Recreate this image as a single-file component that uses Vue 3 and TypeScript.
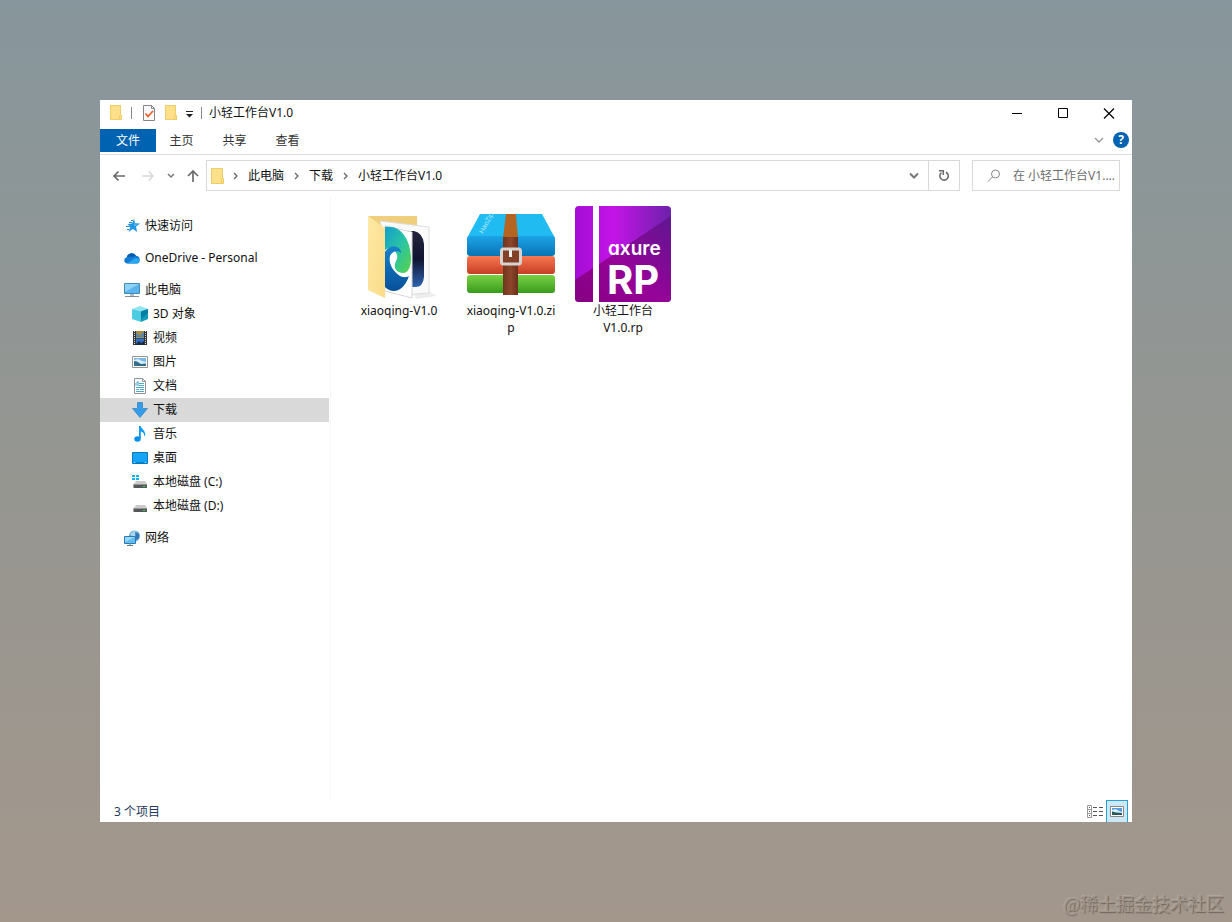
<script setup lang="ts">
import { ref } from 'vue'

interface NavItem {
  id: string
  label: string
  icon: string
  child?: boolean
  spaced?: boolean
}

interface FileItem {
  icon: string
  lines: string[]
}

const tabs: string[] = ['主页', '共享', '查看']
const crumbs: string[] = ['此电脑', '下载', '小轻工作台V1.0']

const navItems: NavItem[] = [
  { id: 'quick', label: '快速访问', icon: 'star' },
  { id: 'onedrive', label: 'OneDrive - Personal', icon: 'cloud', spaced: true },
  { id: 'pc', label: '此电脑', icon: 'pc', spaced: true },
  { id: '3d', label: '3D 对象', icon: 'cube', child: true },
  { id: 'video', label: '视频', icon: 'film', child: true },
  { id: 'pictures', label: '图片', icon: 'picture', child: true },
  { id: 'docs', label: '文档', icon: 'doc', child: true },
  { id: 'downloads', label: '下载', icon: 'down', child: true },
  { id: 'music', label: '音乐', icon: 'music', child: true },
  { id: 'desktop', label: '桌面', icon: 'desktop', child: true },
  { id: 'c', label: '本地磁盘 (C:)', icon: 'diskc', child: true },
  { id: 'd', label: '本地磁盘 (D:)', icon: 'disk', child: true },
  { id: 'network', label: '网络', icon: 'network', spaced: true },
]

const files: FileItem[] = [
  { icon: 'folder', lines: ['xiaoqing-V1.0'] },
  { icon: 'zip', lines: ['xiaoqing-V1.0.zi', 'p'] },
  { icon: 'axure', lines: ['小轻工作台', 'V1.0.rp'] },
]

const selected = ref<string>('downloads')
const query = ref<string>('')
</script>

<template>
  <div class="wallpaper">
    <main class="window">
      <header class="titlebar">
        <svg class="ico" viewBox="0 0 16 16" aria-hidden="true">
          <path d="M2 0h11v10h1v5H2z" fill="#fde089" />
          <path d="M2.500 .5h10v10M2.500.5v14h11v-4h-2v4" fill="none" stroke="#efcd69" />
        </svg>
        <span class="bar"></span>
        <button class="quick check" aria-label="属性">
          <svg class="ico" viewBox="0 0 16 16">
            <path d="M2.500.5h8l3 3v12h-11z" fill="#fafafa" stroke="#858585" />
            <path d="M10.500.5v3h3" fill="none" stroke="#858585" />
            <path d="M4.500 8.500l2.500 3L12 6" fill="none" stroke="#ee5a2c" stroke-width="1.700" />
          </svg>
        </button>
        <button class="quick" aria-label="新建文件夹">
          <svg class="ico" viewBox="0 0 16 16">
            <path d="M2 0h11v10h1v5H2z" fill="#fde089" />
            <path d="M2.500.5h10v10M2.500.5v14h11v-4h-2v4" fill="none" stroke="#efcd69" />
          </svg>
        </button>
        <button class="quick drop" aria-label="自定义快速访问工具栏">
          <svg width="7" height="7" viewBox="0 0 7 7">
            <path d="M0 0h7v1H0zM0 3h7L3.500 6.500z" fill="#222" />
          </svg>
        </button>
        <span class="bar"></span>
        <h1 class="caption">小轻工作台V1.0</h1>
        <div class="controls">
          <button aria-label="最小化">
            <svg width="12" height="11" viewBox="0 0 12 11"><path d="M1 5.500h10" stroke="#000" /></svg>
          </button>
          <button aria-label="最大化">
            <svg width="12" height="11" viewBox="0 0 12 11"><path d="M1.500.5h9v9h-9z" fill="none" stroke="#000" /></svg>
          </button>
          <button aria-label="关闭">
            <svg width="12" height="11" viewBox="0 0 12 11"><path d="M1 .5l10 10M11 .5L1 10.500" stroke="#000" stroke-width="1.200" /></svg>
          </button>
        </div>
      </header>

      <div class="ribbon">
        <button class="tab file">文件</button>
        <button v-for="t in tabs" :key="t" class="tab">{{ t }}</button>
        <div class="ribbon-end">
          <button class="plain" aria-label="展开功能区">
            <svg width="10" height="6" viewBox="0 0 10 6"><path d="M1 1l4 4 4-4" fill="none" stroke="#979797" stroke-width="1.300" /></svg>
          </button>
          <button class="help" aria-label="帮助">?</button>
        </div>
      </div>

      <div class="address-row">
        <div class="history">
          <button class="plain" aria-label="后退">
            <svg width="14" height="12" viewBox="0 0 14 12"><path d="M13 6H2M6.500 1.500L2 6l4.500 4.500" fill="none" stroke="#6c6c6c" stroke-width="1.700" /></svg>
          </button>
          <button class="plain forward" aria-label="前进" disabled>
            <svg width="14" height="12" viewBox="0 0 14 12"><path d="M1 6h11M7.500 1.500L12 6l-4.500 4.500" fill="none" stroke="#d8d8d8" stroke-width="1.600" /></svg>
          </button>
          <button class="plain" aria-label="最近位置">
            <svg width="8" height="6" viewBox="0 0 8 6"><path d="M1 1l3 3 3-3" fill="none" stroke="#777" stroke-width="1.500" /></svg>
          </button>
          <button class="plain" aria-label="向上">
            <svg width="12" height="14" viewBox="0 0 12 14"><path d="M6 13V2M1 7l5-5 5 5" fill="none" stroke="#6c6c6c" stroke-width="1.700" /></svg>
          </button>
        </div>
        <nav class="address" aria-label="地址">
          <svg class="ico" viewBox="0 0 16 16" aria-hidden="true">
            <path d="M2 0h12v10h1v6H2z" fill="#fde089" />
            <path d="M2.500.5h11v10M2.500.5v15h12v-5h-2v5" fill="none" stroke="#efcd69" />
          </svg>
          <template v-for="c in crumbs" :key="c">
            <svg class="sep" width="5" height="8" viewBox="0 0 5 8" aria-hidden="true"><path d="M1 1l3 3-3 3" fill="none" stroke="#666" stroke-width="1.300" /></svg>
            <a href="#" class="crumb">{{ c }}</a>
          </template>
          <button class="plain addr-drop" aria-label="以前的位置">
            <svg width="10" height="7" viewBox="0 0 10 7"><path d="M1 1.500l4 4 4-4" fill="none" stroke="#777" stroke-width="2" /></svg>
          </button>
          <button class="plain refresh" aria-label="刷新">
            <svg width="12" height="13" viewBox="0 0 12 13">
              <path d="M8 3.200A4.200 4.200 0 1 1 3.400 3.700" fill="none" stroke="#6c6c6c" stroke-width="1.600" />
              <path d="M1 1.700h4.300V6" fill="none" stroke="#6c6c6c" stroke-width="1.500" />
            </svg>
          </button>
        </nav>
        <label class="search">
          <svg width="14" height="14" viewBox="0 0 14 14" aria-hidden="true">
            <circle cx="8.500" cy="5" r="4" fill="none" stroke="#888" />
            <path d="M5.500 8L1 12.500" stroke="#888" />
          </svg>
          <input v-model="query" type="text" placeholder="在 小轻工作台V1...." aria-label="搜索" />
        </label>
      </div>

      <div class="content">
        <nav class="tree" aria-label="导航窗格">
          <button
            v-for="n in navItems"
            :key="n.id"
            class="node"
            :class="{ child: n.child, spaced: n.spaced, active: selected === n.id }"
            @click="selected = n.id"
          >
            <svg class="ico" viewBox="0 0 16 16" aria-hidden="true">
              <template v-if="n.icon === 'star'">
                <path d="M10 1l1.200 4.300 4.800.2-4 3.200 1.200 5.300-4.300-3L4.500 14l1.900-5.200L3.500 6l4.600-.5z" fill="#2196e3" />
                <path d="M10 3l.8 3.200 3.200.3-4 2z" fill="#5dbbf1" />
                <path d="M5 4.500h3M2 8.500h4M3 11.500h2M7 2.500h2" stroke="#2d87c4" />
              </template>
              <template v-else-if="n.icon === 'cloud'">
                <path d="M3.200 13.500a3.200 3.200 0 0 1-.5-6.300A5 5 0 0 1 12 5.700a4 4 0 0 1 1 7.800z" fill="#1479d3" />
                <path d="M3 7.200a5 5 0 0 1 9-1.500 4 4 0 0 0-3 1.300L6 6.500z" fill="#075cae" />
                <path d="M3.200 13.500l7.500-5.200a3.600 3.600 0 0 1 5 3.200 2.400 2.400 0 0 1-2.500 2z" fill="#29a6ef" />
              </template>
              <template v-else-if="n.icon === 'pc'">
                <path d="M.5 1.500h15v10H.5z" fill="#5ab4ee" stroke="#4288b9" />
                <path d="M1 2h14L1 10z" fill="#8dd2f8" />
                <path d="M6 12h4v2H6z" fill="#b2bcc2" />
                <path d="M1 14.500h14" stroke="#7e8d97" />
              </template>
              <template v-else-if="n.icon === 'cube'">
                <path d="M0 3l8-3 8 3-6 3z" fill="#8ee4f0" />
                <path d="M0 3l9 2.500V16l-9-3z" fill="#4bcce0" />
                <path d="M9 5.500L16 3v10l-7 3z" fill="#149cba" />
                <path d="M9 5.500L16 3v4l-7 6z" fill="#087fa4" />
              </template>
              <template v-else-if="n.icon === 'film'">
                <path d="M1 1h14v14H1z" fill="#323537" />
                <path d="M4 1h8v7H4z" fill="#a48d46" />
                <path d="M4 8.500h8V15H4z" fill="#3470b9" />
                <path d="M4 3l4 3 4-4v5H4z" fill="#4e85bb" />
                <path d="M4 14l3-3 2 2 3-2v4H4z" fill="#182b49" />
                <path d="M2.500 1v14M13.500 1v14" stroke="#ddd" stroke-dasharray="1 1" />
              </template>
              <template v-else-if="n.icon === 'picture'">
                <path d="M.5 2.500h15v11H.5z" fill="#fff" stroke="#919699" />
                <path d="M2 4h12v8H2z" fill="#7db8ea" />
                <path d="M2 6l4-1 4 2 4 1v3H2z" fill="#d5effa" />
                <path d="M2 7l3 .5L9 10l5-.5V12H2z" fill="#376d8c" />
              </template>
              <template v-else-if="n.icon === 'doc'">
                <path d="M2.500.5h8l3 3v12h-11z" fill="#fff" stroke="#8b9499" />
                <path d="M10.500.5v3h3" fill="none" stroke="#8b9499" />
                <path d="M7 5.500h5M7 7.500h5M4 9.500h8M4 11.500h3M8 11.500h4M4 13.500h8" stroke="#4ea9d0" />
                <path d="M4 7.500V5.500l2-2v4.500" stroke="#389ac5" fill="none" />
              </template>
              <template v-else-if="n.icon === 'down'">
                <path d="M5.500.5h5v6h5L8 15.500.5 6.500h5z" fill="#339be7" stroke="#4a92c6" />
              </template>
              <template v-else-if="n.icon === 'music'">
                <ellipse cx="5.500" cy="13" rx="3.200" ry="2.700" fill="#078ee7" />
                <path d="M7 0h1.800c.3 3 4.700 4 4.400 9L12 10.500C12.500 7 11 6 8.800 5.500V13H7z" fill="#0c9bf0" />
              </template>
              <template v-else-if="n.icon === 'desktop'">
                <path d="M.5 2.500h15v11H.5z" fill="#18a4f5" stroke="#0878bf" />
                <path d="M2 12.500h1M13 12.500h1" stroke="#9adfff" />
                <path d="M4 12.500h8" stroke="#0c84cc" />
              </template>
              <template v-else-if="n.icon === 'diskc' || n.icon === 'disk'">
                <path v-if="n.icon === 'diskc'" d="M0 1h3v2H0zM4 1h3v2H4zM0 4h3v2H0zM4 4h3v2H4z" fill="#06b6eb" />
                <path d="M4 7h9l2 3H2z" fill="#cbcbcb" />
                <path d="M1.500 10h13.500v4H1.500z" fill="#55585a" />
                <path d="M2 10.500h13" stroke="#949494" />
                <path d="M11 12.500h2" stroke="#32e63a" />
              </template>
              <template v-else>
                <circle cx="10.500" cy="6" r="5.500" fill="#69a8d8" />
                <path d="M6 4l4-3 3 1-2 3 3 2-3 4-3-5z" fill="#a6d9ef" />
                <path d="M11 2l4 2v4l-3 2z" fill="#357ab4" />
                <path d="M.5 6.500h11v7H.5z" fill="#61bdf0" stroke="#2d79ac" />
                <path d="M1 7h10l-10 5z" fill="#98dbf8" />
                <path d="M6 13v2M3 15.500h6" stroke="#527f9e" />
              </template>
            </svg>
            <span>{{ n.label }}</span>
          </button>
        </nav>

        <section class="files" aria-label="文件">
          <button v-for="f in files" :key="f.icon" class="item">
            <svg v-if="f.icon === 'folder'" class="big" viewBox="0 0 96 96" aria-hidden="true">
              <defs>
                <linearGradient id="flap" x1="0" y1="0" x2="1" y2="1">
                  <stop offset="0" stop-color="#ffe9a6" /><stop offset="1" stop-color="#f9dc88" />
                </linearGradient>
                <linearGradient id="edge" x1="0" y1="0" x2="1" y2="1">
                  <stop offset="0" stop-color="#129fca" /><stop offset=".5" stop-color="#2bc3a5" /><stop offset="1" stop-color="#58d547" />
                </linearGradient>
                <linearGradient id="deep" x1="0" y1="0" x2="0" y2="1">
                  <stop offset="0" stop-color="#1683cb" /><stop offset="1" stop-color="#07509a" />
                </linearGradient>
                <linearGradient id="night" x1="0" y1="0" x2="0" y2="1">
                  <stop offset="0" stop-color="#24253b" /><stop offset=".5" stop-color="#101331" /><stop offset="1" stop-color="#2e65b0" />
                </linearGradient>
              </defs>
              <path d="M62 85h16l7 5-20 3z" fill="#ededed" />
              <path d="M17 10h49v15L35 30z" fill="#efcf7b" />
              <path d="M29 15l49 6v66l-24 2z" fill="#fafafa" stroke="#dedede" />
              <path d="M57 25h6q9 2 10 13v33q-1 11-10 10h-6z" fill="url(#night)" />
              <path d="M34 20l27 6v66l-27-7z" fill="#fff" stroke="#d6d6d6" />
              <path d="M34 21C50 18 60 34 60 53c0 8-3 14-8 14-6 0-9-4-8-9 1-4 3-5 2-9-2-6-7-9-12-5z" fill="url(#edge)" />
              <path d="M34 46c3-5 8-7 12-5 3 1 4 4 4 6-3-3-9-2-11 3-2 8 4 16 10 20 4 2 8 1 9 0-3 9-9 15-15 15-4 0-7-2-9-4z" fill="url(#deep)" />
              <path d="M17 10l17 12v70L17 84z" fill="url(#flap)" />
            </svg>

            <svg v-else-if="f.icon === 'zip'" class="big" viewBox="0 0 96 96" aria-hidden="true">
              <defs>
                <linearGradient id="zblue" x1="0" y1="0" x2="0" y2="1"><stop offset="0" stop-color="#1da4e8" /><stop offset="1" stop-color="#0874b5" /></linearGradient>
                <linearGradient id="zred" x1="0" y1="0" x2="0" y2="1"><stop offset="0" stop-color="#f87851" /><stop offset="1" stop-color="#c63e24" /></linearGradient>
                <linearGradient id="zgreen" x1="0" y1="0" x2="0" y2="1"><stop offset="0" stop-color="#7bd144" /><stop offset="1" stop-color="#379c1c" /></linearGradient>
                <linearGradient id="strap" x1="0" y1="0" x2="1" y2="0"><stop offset="0" stop-color="#70351e" /><stop offset=".5" stop-color="#8d462b" /><stop offset="1" stop-color="#6a301e" /></linearGradient>
              </defs>
              <path d="M17 8h62l13 24H4z" fill="#20bbf1" />
              <rect x="4" y="30" width="88" height="20" rx="3" fill="url(#zblue)" />
              <rect x="4" y="50" width="88" height="18" rx="3" fill="url(#zred)" />
              <rect x="4" y="69" width="88" height="18" rx="3" fill="url(#zgreen)" />
              <path d="M43 8h10l2 24H40z" fill="#b46522" />
              <path d="M40 31h15v58H40z" fill="url(#strap)" />
              <rect x="38.500" y="43" width="19" height="15" rx="2" fill="#814027" stroke="#d8d3cf" stroke-width="3" />
              <path d="M47.500 44v7" stroke="#eee" stroke-width="3" />
              <text x="20" y="28" transform="rotate(-62 20 28)" class="zip-mark">HaoZip</text>
            </svg>

            <svg v-else class="big" viewBox="0 0 96 96" aria-hidden="true">
              <defs>
                <clipPath id="round"><rect width="96" height="96" rx="4" /></clipPath>
                <linearGradient id="ax" x1="0" y1="0" x2="1" y2="0"><stop offset="0" stop-color="#a40cd5" /><stop offset=".4" stop-color="#c414e7" /><stop offset="1" stop-color="#6d21aa" /></linearGradient>
                <linearGradient id="axlow" x1="0" y1="1" x2="1" y2="0"><stop offset="0" stop-color="#850082" /><stop offset=".45" stop-color="#960398" /><stop offset="1" stop-color="#601691" /></linearGradient>
              </defs>
              <g clip-path="url(#round)">
                <path d="M0 0h96v96H0z" fill="url(#ax)" />
                <path d="M0 74L96 10v86H0z" fill="url(#axlow)" />
                <path d="M18 0h6v96h-6z" fill="#fff" />
              </g>
              <text x="33" y="49" class="ax-word">axure</text>
              <text x="32" y="88" class="ax-rp">RP</text>
            </svg>
            <span v-for="l in f.lines" :key="l" class="name">{{ l }}</span>
          </button>
        </section>
      </div>

      <footer class="status">
        <span>3 个项目</span>
        <div class="views">
          <button class="view" aria-label="详细信息">
            <svg width="16" height="13" viewBox="0 0 16 13">
              <path d="M.5.5h4v12h-4zM.5 4.500h4M.5 8.500h4" fill="none" stroke="#999" />
              <path d="M2 2.500h1M2 6.500h1M2 10.500h1M6 2.500h4M12 2.500h4M6 6.500h4M12 6.500h4M6 10.500h4M12 10.500h4" stroke="#555" />
            </svg>
          </button>
          <button class="view on" aria-label="大图标">
            <svg width="14" height="11" viewBox="0 0 14 11">
              <path d="M.5.5h13v10H.5z" fill="#fff" stroke="#888" />
              <path d="M2 2h10v7H2z" fill="#5b9be0" />
              <path d="M2 4l4-1 3 2 3 1v1H2z" fill="#d4eefa" />
              <path d="M2 5.500l4 1 6 .5v2H2z" fill="#2b575c" />
            </svg>
          </button>
        </div>
      </footer>
    </main>
    <p class="watermark">@稀土掘金技术社区</p>
  </div>
</template>

<style>
body {
  margin: 0;
}
</style>

<style scoped>
* {
  box-sizing: border-box;
}
.wallpaper {
  position: relative;
  display: flex;
  min-height: 100vh;
  padding: 100px;
  background: linear-gradient(#87969c, #959691 50%, #a3978c);
  font: 12px/16px "Noto Sans", "Noto Sans CJK SC", sans-serif;
  color: #111;
}
.window {
  flex: 1;
  min-width: 0;
  display: flex;
  flex-direction: column;
  background: #fff;
}
button {
  padding: 0;
  border: 0;
  background: none;
  font: inherit;
  color: inherit;
}
svg {
  display: block;
  flex: none;
}
.ico {
  width: 16px;
  height: 16px;
}
.titlebar {
  display: flex;
  align-items: center;
  height: 26px;
  padding-left: 8px;
}
.bar {
  width: 1px;
  height: 12px;
  margin: 0 7px;
  background: #888;
}
.quick {
  margin-right: 6px;
}
.check {
  margin-left: 2px;
}
.drop {
  padding-top: 2px;
  margin: 0 1px;
}
.caption {
  margin: 0;
  font-size: 12px;
  font-weight: 400;
}
.controls {
  display: flex;
  margin-left: auto;
}
.controls button {
  display: grid;
  place-items: center;
  width: 46px;
  height: 24px;
}
.ribbon {
  display: flex;
  align-items: center;
  height: 29px;
  border-bottom: 1px solid #dcdcdc;
}
.tab {
  width: 53px;
  height: 23px;
  padding-top: 1px;
  color: #333;
}
.tab.file {
  width: 56px;
  margin-right: -1px;
  background: #0063b1;
  color: #fff;
}
.ribbon-end {
  display: flex;
  align-items: center;
  gap: 9px;
  margin-left: auto;
  padding-right: 3px;
}
.help {
  width: 16px;
  height: 16px;
  border-radius: 50%;
  background: #0063b1;
  color: #fff;
  font-weight: 700;
}
.address-row {
  display: flex;
  align-items: center;
  gap: 12px;
  height: 41px;
  padding: 0 12px;
}
.history {
  display: flex;
  align-items: center;
  gap: 12px;
  margin-right: -5px;
}
.forward {
  margin-left: 3px;
}
.address {
  flex: 1;
  display: flex;
  align-items: center;
  height: 31px;
  padding-left: 2px;
  border: 1px solid #d9d9d9;
}
.sep {
  margin: 0 10px 0 8px;
}
.crumb {
  color: inherit;
  text-decoration: none;
  margin-right: 2px;
}
.addr-drop {
  margin-left: auto;
  margin-right: 9px;
}
.refresh {
  display: grid;
  place-items: center;
  width: 31px;
  height: 100%;
  border-left: 1px solid #d9d9d9;
}
.search {
  display: flex;
  align-items: center;
  gap: 12px;
  width: 148px;
  height: 31px;
  padding-left: 14px;
  border: 1px solid #d9d9d9;
}
.search input {
  flex: 1;
  min-width: 0;
  padding: 0;
  border: 0;
  outline: 0;
  background: none;
  font: inherit;
}
.search input::placeholder {
  color: #6d6d6d;
  opacity: 1;
}
.content {
  flex: 1;
  display: flex;
}
.tree {
  width: 231px;
  padding: 18px 1px 0 0;
  border-right: 1px solid #f7f7f7;
}
.node {
  display: flex;
  align-items: center;
  gap: 5px;
  width: 100%;
  height: 24px;
  padding-left: 24px;
  text-align: left;
}
.node.child {
  padding-left: 32px;
}
.node.spaced {
  margin-top: 8px;
}
.node.active {
  background: #d9d9d9;
}
.files {
  flex: 1;
  display: flex;
  align-items: flex-start;
  padding: 10px 0 0 12px;
}
.item {
  display: flex;
  flex-direction: column;
  align-items: center;
  width: 112px;
}
.big {
  width: 96px;
  height: 96px;
  overflow: visible;
}
.name {
  line-height: 17px;
}
.zip-mark {
  font: 7px "Liberation Sans", sans-serif;
  fill: #b5e9fd;
}
.ax-word {
  font: 600 19px Inter, sans-serif;
  font-feature-settings: "cv11";
  fill: #fff;
}
.ax-rp {
  font: 700 40px Inter, sans-serif;
  fill: #fff;
}
.status {
  display: flex;
  align-items: center;
  justify-content: space-between;
  height: 22px;
  padding: 0 4px 0 14px;
  color: #1e395b;
}
.status span {
  padding-top: 2px;
}
.views {
  display: flex;
}
.view {
  display: grid;
  place-items: center;
  width: 22px;
  height: 22px;
}
.view.on {
  border: 1px solid #26a0da;
  border-bottom: 0;
  background: #cce8f6;
}
.watermark {
  position: absolute;
  right: 8px;
  bottom: 4px;
  margin: 0;
  font: 18px/26px "Liberation Serif", "Noto Sans CJK SC", serif;
  color: #a0958b;
  text-shadow: 1px 1px 1px #6a625a, -1px -1px 1px #b3a99f;
}
</style>
